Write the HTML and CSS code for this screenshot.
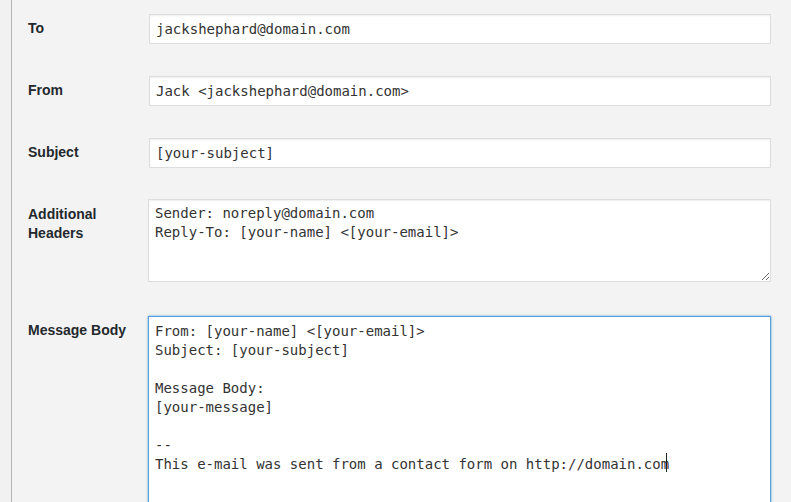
FILE: index.html
```html
<!DOCTYPE html>
<html>
<head>
<meta charset="utf-8">
<link rel="stylesheet" href="styles.css">
</head>
<body>
<div class="panel">
  <div class="form">
    <div class="row">
      <label class="label" for="to">To</label>
      <input class="field" id="to" type="text" value="jackshephard@domain.com">
    </div>
    <div class="row">
      <label class="label" for="from">From</label>
      <input class="field" id="from" type="text" value="Jack &lt;jackshephard@domain.com&gt;">
    </div>
    <div class="row">
      <label class="label" for="subject">Subject</label>
      <input class="field" id="subject" type="text" value="[your-subject]">
    </div>
    <div class="row row-headers">
      <label class="label" for="headers">Additional<br>Headers</label>
      <textarea class="area area-headers" id="headers">Sender: noreply@domain.com
Reply-To: [your-name] &lt;[your-email]&gt;</textarea>
    </div>
    <div class="row row-body">
      <label class="label" for="body">Message Body</label>
      <div class="area-wrap">
        <textarea class="area area-body" id="body">From: [your-name] &lt;[your-email]&gt;
Subject: [your-subject]

Message Body:
[your-message]

--
This e-mail was sent from a contact form on http://domain.com</textarea>
        <span class="caret"></span>
      </div>
    </div>
  </div>
</div>
</body>
</html>
```

FILE: styles.css
```css
html, body {
  margin: 0;
  padding: 0;
  height: 100%;
  overflow: hidden;
}
body {
  background: #f1f1f1;
  font-family: "Liberation Sans", Arial, sans-serif;
  color: #23282d;
}
.panel {
  margin-left: 11px;
  height: 100%;
  border-left: 1px solid #b4b4b4;
  background: #f3f3f3;
  padding: 14px 20px 0 16px;
  box-sizing: border-box;
}
.form {
  display: flex;
  flex-direction: column;
  gap: 32px;
}
.row {
  display: grid;
  grid-template-columns: 121px 1fr;
  align-items: start;
}
.row-headers {
  margin-top: -1px;
}
.row-body {
  margin-top: 2px;
}
.label {
  font-size: 14px;
  font-weight: bold;
  line-height: 19px;
  padding-top: 5px;
  color: #23282d;
}
.row-headers .label {
  padding-top: 6px;
}
.field {
  display: block;
  box-sizing: border-box;
  width: 100%;
  height: 30px;
  margin: 0;
  padding: 0 6px;
  border: 1px solid #dddddd;
  background: #fff;
  box-shadow: inset 0 1px 2px rgba(0,0,0,0.07);
  font-family: "DejaVu Sans Mono", "Liberation Mono", monospace;
  font-size: 14px;
  color: #333;
  outline: none;
}
.area {
  display: block;
  box-sizing: border-box;
  width: 100%;
  margin: 0;
  padding: 4px 6px;
  border: 1px solid #dddddd;
  background: #fff;
  box-shadow: inset 0 1px 2px rgba(0,0,0,0.07);
  font-family: "DejaVu Sans Mono", "Liberation Mono", monospace;
  font-size: 14px;
  line-height: 19px;
  color: #333;
  outline: none;
  resize: vertical;
}
.row .area {
  margin-left: -1px;
  width: calc(100% + 1px);
}
.area-headers {
  height: 83px;
}
.area-wrap {
  position: relative;
}
.area-body {
  height: 220px;
  padding-top: 5px;
  border-color: #5b9dd9;
  box-shadow: 0 0 2px rgba(30,140,190,0.8);
}
.caret {
  position: absolute;
  left: 517px;
  top: 137px;
  width: 1px;
  height: 19px;
  background: #222;
}
```
